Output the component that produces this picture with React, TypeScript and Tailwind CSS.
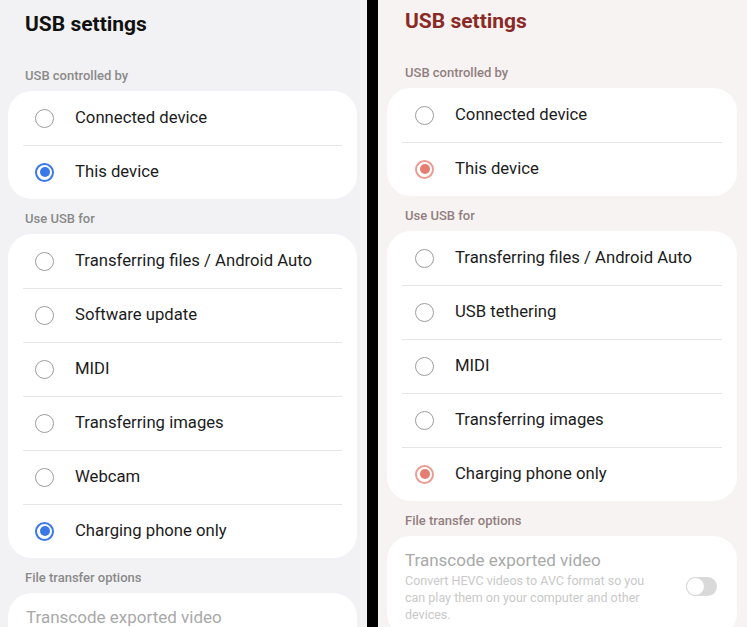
import React from "react";

type Theme = "blue" | "rose";

type PanelProps = {
  theme: Theme;
  options: string[];
  usbFor: number;
  controlled: number;
  className: string;
};

function Radio({ checked, theme }: { checked: boolean; theme: Theme }) {
  if (!checked) {
    return <span className="h-[19px] w-[19px] shrink-0 rounded-full border-[1.5px] border-[#9d9d9d]" />;
  }
  return (
    <span
      className={
        theme === "blue"
          ? "flex h-[19px] w-[19px] shrink-0 items-center justify-center rounded-full border-2 border-[#3a78e6]"
          : "flex h-[19px] w-[19px] shrink-0 items-center justify-center rounded-full border-2 border-[#ec9d93]"
      }
    >
      <span
        className={
          theme === "blue"
            ? "h-[10px] w-[10px] rounded-full bg-[#3a78e6]"
            : "h-[10px] w-[10px] rounded-full bg-[#e57d70]"
        }
      />
    </span>
  );
}

function RadioCard({ items, selected, theme }: { items: string[]; selected: number; theme: Theme }) {
  return (
    <div className="rounded-[24px] bg-white">
      {items.map((label, i) => (
        <div
          key={label}
          className={
            theme === "blue"
              ? "relative flex h-[54px] items-center pl-[27px]"
              : "relative flex h-[54px] items-center pl-[28px]"
          }
        >
          {i > 0 ? <div className="absolute left-[15px] right-[15px] top-0 h-px bg-[#e6e6e6]" /> : null}
          <Radio checked={i === selected} theme={theme} />
          <span className="ml-[21px] text-[16.7px] text-[#1c1c1c]">{label}</span>
        </div>
      ))}
    </div>
  );
}

function SectionHeader({ children, theme }: { children: React.ReactNode; theme: Theme }) {
  return (
    <div
      className={
        theme === "blue"
          ? "px-[17px] pb-[7px] pt-[12px] text-[13px] font-medium leading-[16px] text-[#8a8a8a]"
          : "px-[18px] pb-[7px] pt-[12px] text-[13px] font-medium leading-[16px] text-[#917f7f]"
      }
    >
      {children}
    </div>
  );
}

function Panel({ theme, options, usbFor, controlled, className }: PanelProps) {
  return (
    <div className={className}>
      <h1
        className={
          theme === "blue"
            ? "px-[17px] text-[21px] font-bold leading-[28px] text-[#111111]"
            : "px-[18px] text-[21px] font-bold leading-[28px] text-[#8a2a25]"
        }
      >
        USB settings
      </h1>
      <div className="h-[18px]" />
      <SectionHeader theme={theme}>USB controlled by</SectionHeader>
      <RadioCard items={["Connected device", "This device"]} selected={controlled} theme={theme} />
      <SectionHeader theme={theme}>Use USB for</SectionHeader>
      <RadioCard items={options} selected={usbFor} theme={theme} />
      <SectionHeader theme={theme}>File transfer options</SectionHeader>
      <div className="flex items-center rounded-[24px] bg-white pb-[14px] pl-[18px] pr-[20px] pt-[13px]">
        <div className="flex-1">
          <div className="text-[17px] leading-[22px] text-[#a9a9a9]">Transcode exported video</div>
          <div className="mt-[1px] w-[262px] text-[12.5px] leading-[17px] text-[#c9c9c9]">
            Convert HEVC videos to AVC format so you can play them on your computer and other devices.
          </div>
        </div>
        <div className="relative h-[19px] w-[31px] rounded-full bg-[#d9d9d9]">
          <span className="absolute left-0 top-0 h-[19px] w-[19px] rounded-full border-[1.5px] border-[#d9d9d9] bg-white" />
        </div>
      </div>
    </div>
  );
}

export default function App() {
  return (
    <div
      className="flex h-[627px] w-[747px] overflow-hidden bg-black"
      style={{ fontFamily: "Roboto, 'Noto Sans', sans-serif" }}
    >
      <Panel
        theme="blue"
        className="h-full w-[367px] shrink-0 bg-[#f2f2f4] pl-[8px] pr-[10px] pt-[10px]"
        options={[
          "Transferring files / Android Auto",
          "Software update",
          "MIDI",
          "Transferring images",
          "Webcam",
          "Charging phone only",
        ]}
        controlled={1}
        usbFor={5}
      />
      <div className="w-[11px] shrink-0" />
      <Panel
        theme="rose"
        className="h-full w-[369px] shrink-0 bg-[#f8f3f3] pl-[9px] pr-[10px] pt-[7px]"
        options={[
          "Transferring files / Android Auto",
          "USB tethering",
          "MIDI",
          "Transferring images",
          "Charging phone only",
        ]}
        controlled={1}
        usbFor={4}
      />
    </div>
  );
}
